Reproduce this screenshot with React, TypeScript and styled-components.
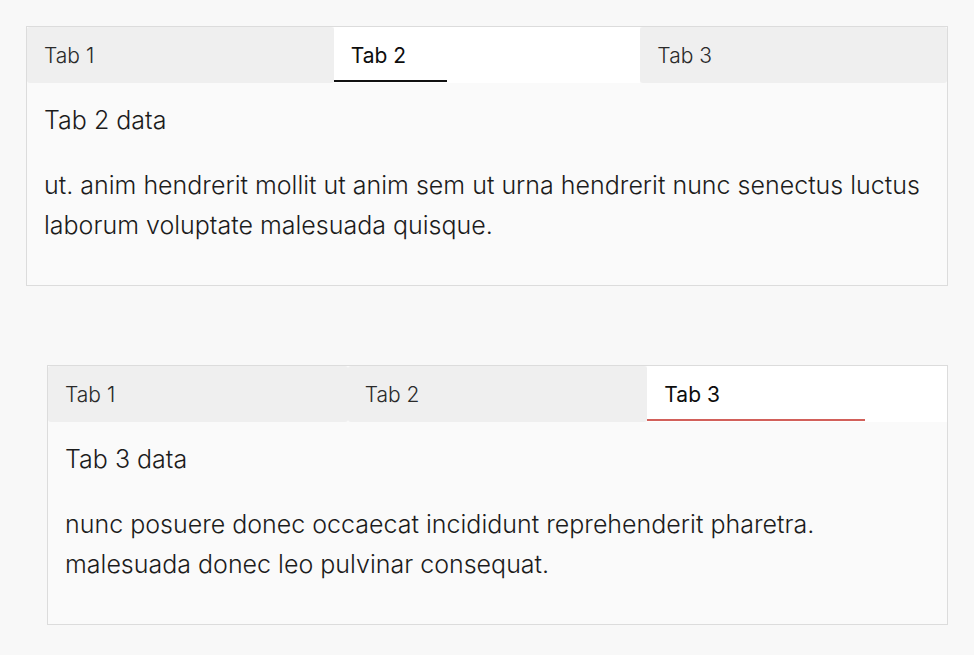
import React, { useState } from "react";
import styled, { createGlobalStyle } from "styled-components";

const GlobalStyle = createGlobalStyle`
    body {
        margin: 0;
        background: #f8f8f8;
        font-family: Inter, "Noto Sans", sans-serif;
        color: #1c1c1c;
    }
`

interface TabItem {
    label: string
    title: string
    text: string
}

interface TabsProps {
    tabs: TabItem[]
    initial: number
    accent: string
    indicator: number
    offset: number
}

const Page = styled.main`
    padding: 26px 26px 30px 26px;
    display: flex;
    flex-direction: column;
    gap: 79px;
`
const Panel = styled.section<{ $offset: number }>`
    margin-left: ${(p) => p.$offset}px;
    background: #fafafa;
    border: 1px solid #dcdcdc;
    height: 258px;
`
const TabBar = styled.div`
    display: flex;
    height: 56px;
`
const TabButton = styled.button<{ $active: boolean }>`
    position: relative;
    flex: 1;
    border: none;
    margin: 0;
    padding: 0 17px;
    text-align: left;
    font-family: inherit;
    font-size: 21px;
    font-weight: ${(p) => (p.$active ? 400 : 300)};
    color: ${(p) => (p.$active ? "#0d0d0d" : "#2a2a2a")};
    background: ${(p) => (p.$active ? "#ffffff" : "#efefef")};
    border-radius: ${(p) => (p.$active ? "0" : "3px")};
    cursor: pointer;
`
const Indicator = styled.span<{ $color: string }>`
    position: absolute;
    left: 0;
    bottom: 1px;
    height: 2px;
    background: ${(p) => p.$color};
`
const Content = styled.div`
    padding: 22px 17px 0 17px;
`
const Title = styled.h3`
    margin: 0 0 30px 0;
    font-size: 25px;
    line-height: 30px;
    font-weight: 300;
`
const Body = styled.p`
    margin: 0;
    font-size: 25px;
    line-height: 40px;
    font-weight: 300;
`

const Tabs = function ({ tabs, initial, accent, indicator, offset }: TabsProps) {
    const [current, setCurrent] = useState(initial)
    const tab = tabs[current]
    return (
        <Panel $offset={offset}>
            <TabBar>
                {tabs.map((t, i) => (
                    <TabButton key={t.label} $active={i === current} onClick={() => setCurrent(i)}>
                        {t.label}
                        {i === current && <Indicator $color={accent} style={{ width: indicator }} />}
                    </TabButton>
                ))}
            </TabBar>
            <Content>
                <Title>{tab.title}</Title>
                <Body>{tab.text}</Body>
            </Content>
        </Panel>
    )
}

const firstSet: TabItem[] = [
    { label: "Tab 1", title: "Tab 1 data", text: "lorem ipsum dolor sit amet." },
    {
        label: "Tab 2",
        title: "Tab 2 data",
        text: "ut. anim hendrerit mollit ut anim sem ut urna hendrerit nunc senectus luctus laborum voluptate malesuada quisque.",
    },
    { label: "Tab 3", title: "Tab 3 data", text: "consequat pulvinar leo donec." },
]

const secondSet: TabItem[] = [
    { label: "Tab 1", title: "Tab 1 data", text: "lorem ipsum dolor sit amet." },
    { label: "Tab 2", title: "Tab 2 data", text: "quisque malesuada voluptate laborum." },
    {
        label: "Tab 3",
        title: "Tab 3 data",
        text: "nunc posuere donec occaecat incididunt reprehenderit pharetra. malesuada donec leo pulvinar consequat.",
    },
]

export default function App() {
    return (
        <>
            <GlobalStyle />
            <Page>
                <Tabs tabs={firstSet} initial={1} accent="#111111" indicator={113} offset={0} />
                <Tabs tabs={secondSet} initial={2} accent="#d2605a" indicator={218} offset={21} />
            </Page>
        </>
    )
}
